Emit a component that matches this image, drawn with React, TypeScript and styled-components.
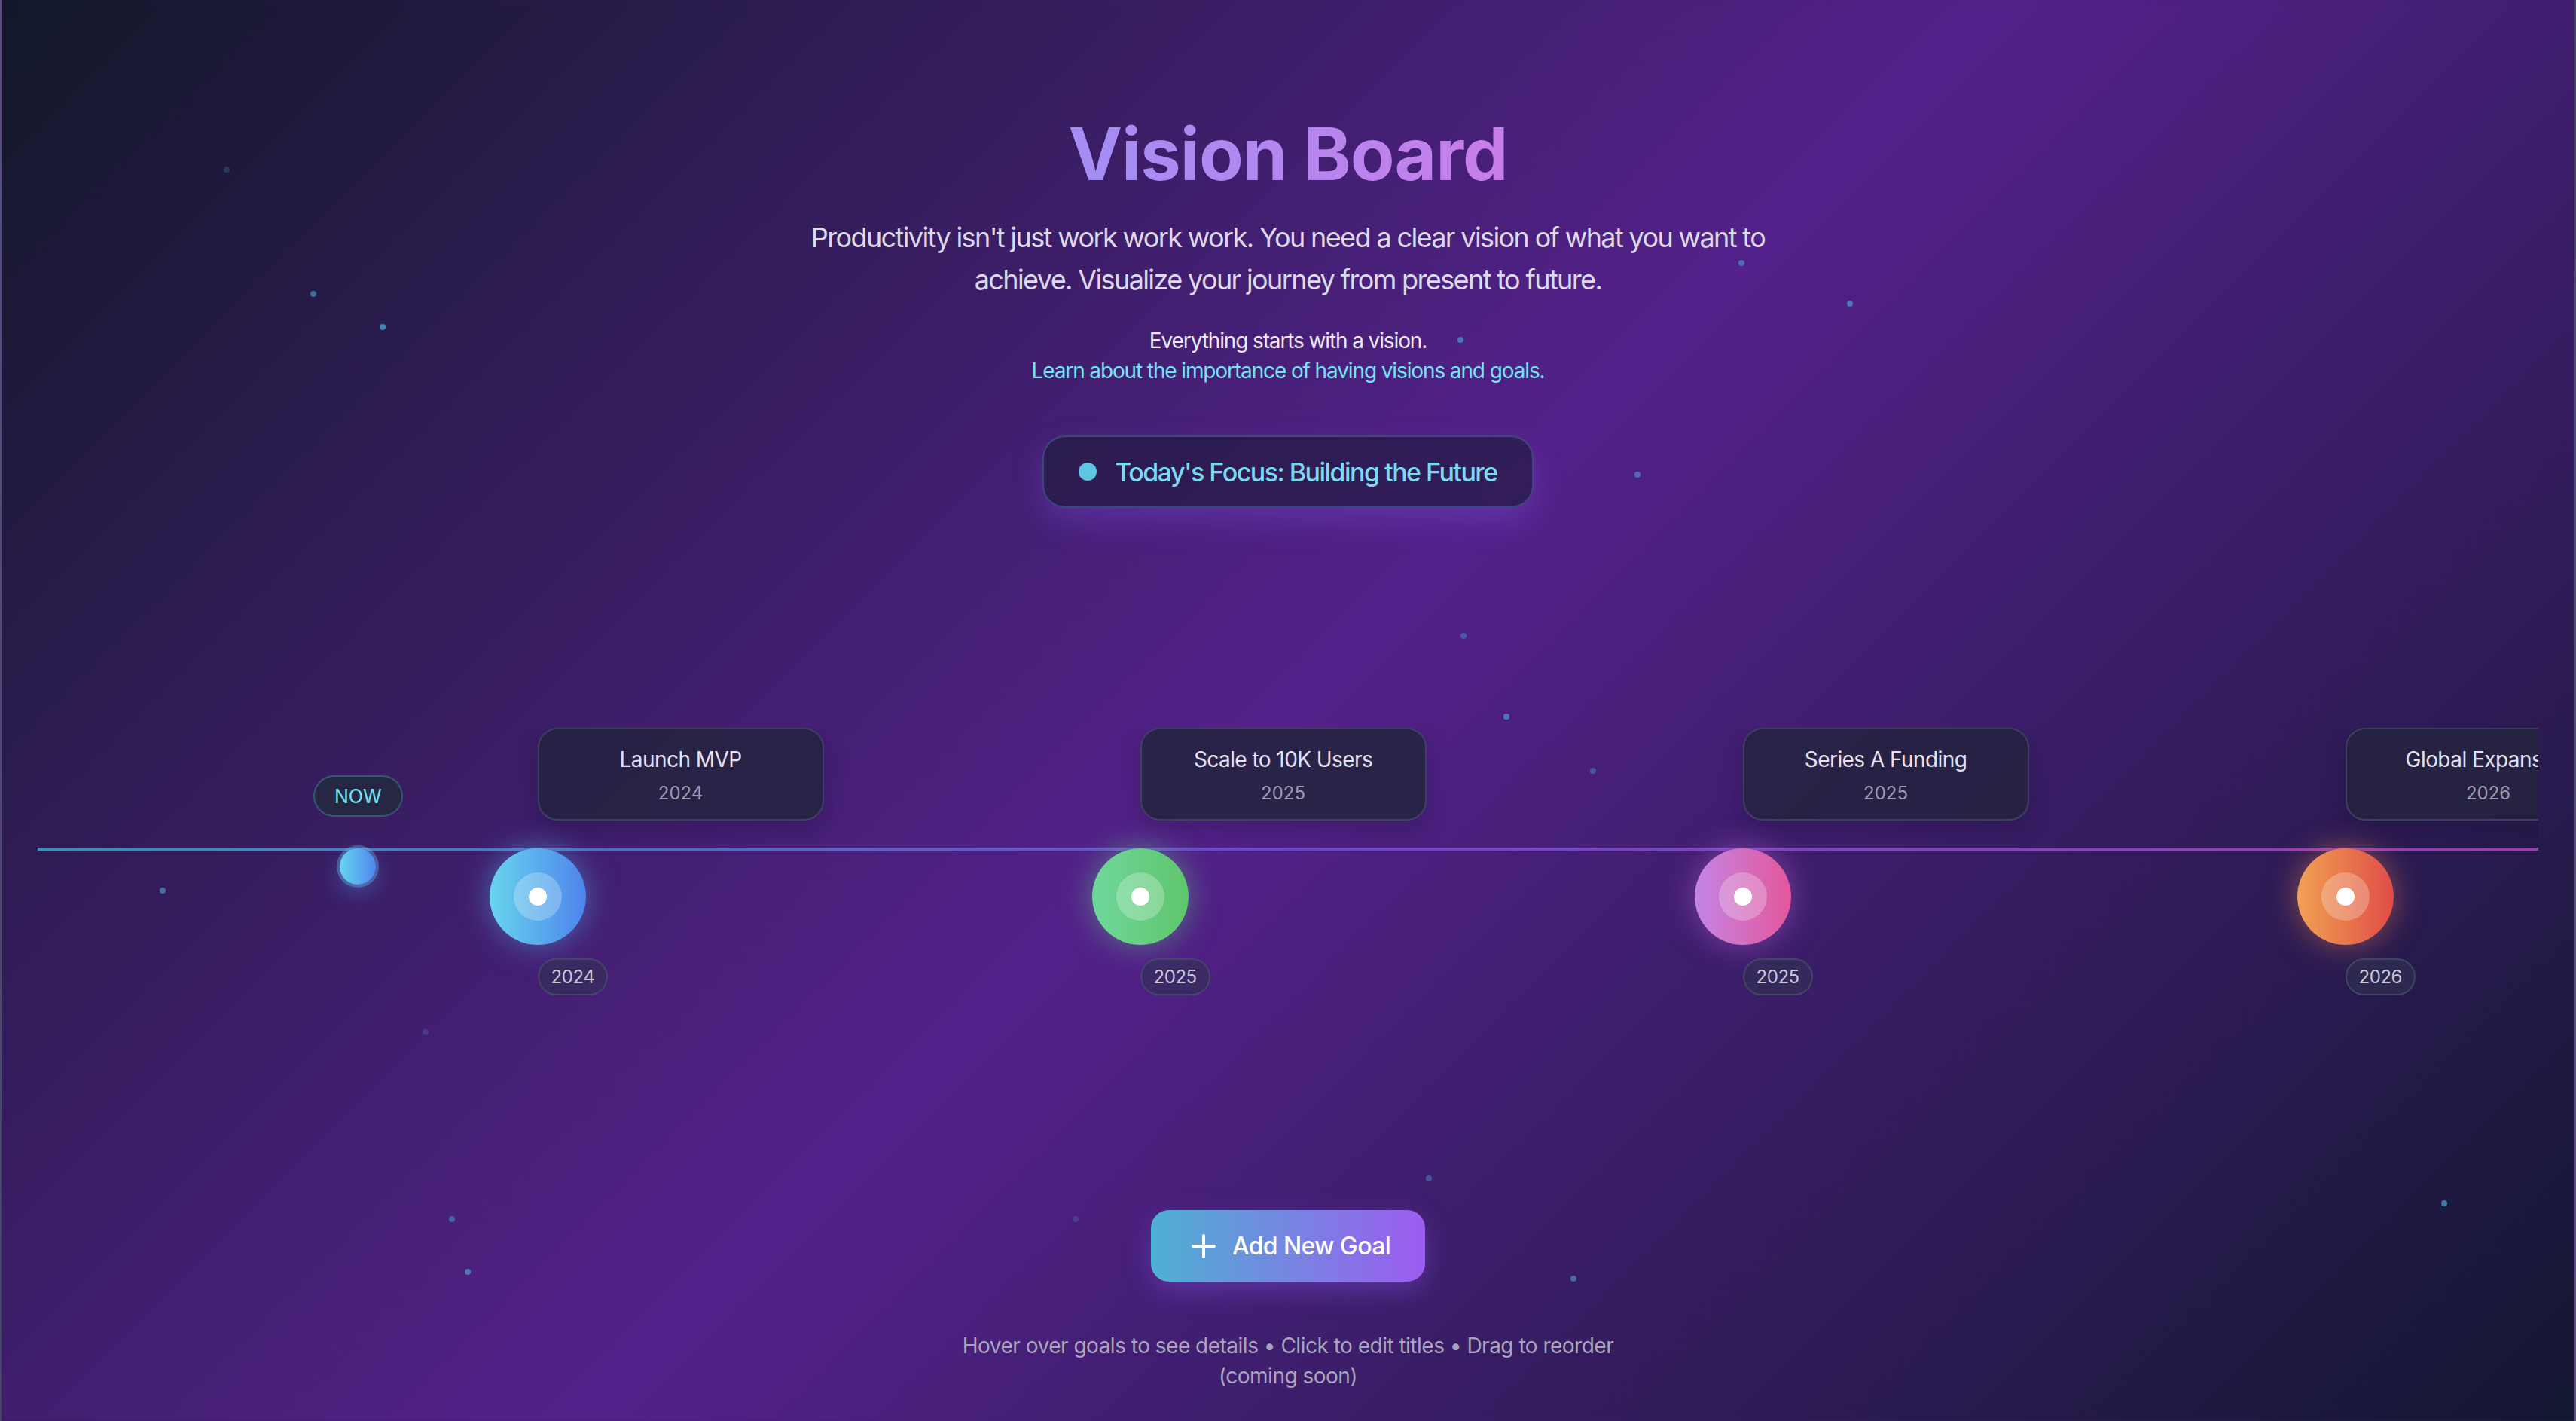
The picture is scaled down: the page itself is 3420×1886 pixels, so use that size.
import * as React from "react"
import styled, { createGlobalStyle } from "styled-components"
import { Plus } from "lucide-react"

const GlobalStyle = createGlobalStyle`
  html, body {
    margin: 0;
    padding: 0;
  }
  body {
    font-family: Inter, "Noto Sans", "Liberation Sans", sans-serif;
    background: #111827;
  }
  * {
    box-sizing: border-box;
  }
`

const Page = styled.div`
  position: relative;
  min-height: 1886px;
  overflow: hidden;
  display: flex;
  flex-direction: column;
  align-items: center;
  padding-top: 156px;
  background: linear-gradient(135deg, #121829 0%, #53218a 50%, #131731 100%);
  border-left: 2px solid rgba(148, 163, 184, 0.35);
  border-right: 2px solid rgba(148, 163, 184, 0.35);
`

const Star = styled.span<{ $o: number }>`
  position: absolute;
  width: 8px;
  height: 8px;
  border-radius: 50%;
  background: #4a8fc2;
  opacity: ${(p) => p.$o};
`

const Title = styled.h1`
  margin: 0 0 35px;
  font-size: 96px;
  line-height: 1;
  font-weight: 700;
  letter-spacing: -1px;
  background: linear-gradient(to right, #a28ef4, #c87eea);
  -webkit-background-clip: text;
  background-clip: text;
  color: transparent;
`

const Intro = styled.p`
  margin: 0;
  max-width: 1344px;
  text-align: center;
  font-size: 36px;
  line-height: 56px;
  letter-spacing: -0.045em;
  color: #ddd8ea;
`

const Note = styled.div`
  margin-top: 33px;
  text-align: center;
  font-size: 28px;
  line-height: 40px;
  letter-spacing: -0.04em;
  color: #ece9f3;
`

const NoteLink = styled.a`
  display: block;
  color: #76e2f6;
  text-decoration: none;
`

const FocusPill = styled.div`
  margin-top: 66px;
  display: flex;
  align-items: center;
  gap: 24px;
  height: 96px;
  padding: 0 46px;
  border-radius: 30px;
  border: 2px solid rgba(70, 110, 160, 0.55);
  background: rgba(28, 26, 56, 0.6);
  box-shadow: 0 18px 40px rgba(139, 92, 246, 0.28);
  color: #7dd9ef;
  font-size: 34px;
  font-weight: 500;
  letter-spacing: -0.045em;
`

const FocusDot = styled.span`
  width: 24px;
  height: 24px;
  border-radius: 50%;
  background: #5ec6e2;
`

const Track = styled.div`
  position: relative;
  align-self: stretch;
  margin: 292px 48px 0;
  overflow: hidden;

  &::before {
    content: "";
    position: absolute;
    left: 0;
    right: 0;
    top: 159px;
    height: 4px;
    background: linear-gradient(to right, #3fa6c6, #6f4fd8 50%, #b046bd);
    opacity: 0.85;
  }
`

const Row = styled.div`
  position: relative;
  display: flex;
  align-items: flex-start;
  padding-left: 366px;
`

const NowMarker = styled.div`
  flex: 0 0 118px;
  display: flex;
  flex-direction: column;
  align-items: center;
  margin-top: 63px;
`

const NowBadge = styled.span`
  height: 55px;
  padding: 0 26px;
  display: flex;
  align-items: center;
  border-radius: 999px;
  border: 2px solid rgba(56, 130, 150, 0.55);
  background: #262743;
  color: #72e3f7;
  font-size: 25px;
  font-weight: 400;
`

const NowDot = styled.span`
  margin-top: 42px;
  width: 48px;
  height: 48px;
  border-radius: 50%;
  background: linear-gradient(to right, #67d6f0, #4f86ee);
  box-shadow: 0 0 0 4px rgba(103, 196, 240, 0.35), 0 10px 30px rgba(80, 150, 240, 0.45);
`

const Goal = styled.div<{ $first?: boolean }>`
  flex: 0 0 800px;
  display: flex;
  flex-direction: column;
  align-items: flex-start;
  margin-left: ${(p) => (p.$first ? "115px" : "0")};
`

const GoalCard = styled.div`
  margin-left: 64px;
  width: 380px;
  height: 123px;
  padding-top: 20px;
  display: flex;
  flex-direction: column;
  align-items: center;
  gap: 9px;
  border-radius: 26px;
  border: 2px solid rgba(70, 72, 105, 0.8);
  background: rgba(36, 35, 64, 0.88);
  box-shadow: 0 12px 30px rgba(15, 10, 40, 0.25);
`

const GoalTitle = styled.span`
  font-size: 28px;
  line-height: 40px;
  font-weight: 400;
  letter-spacing: -0.02em;
  color: #e6e0f0;
  white-space: nowrap;
`

const GoalYear = styled.span`
  font-size: 24px;
  line-height: 32px;
  color: #9d98b5;
`

const Orb = styled.div<{ $from: string; $to: string; $glow: string }>`
  margin-top: 37px;
  width: 128px;
  height: 128px;
  border-radius: 50%;
  display: flex;
  align-items: center;
  justify-content: center;
  background: linear-gradient(to right, ${(p) => p.$from}, ${(p) => p.$to});
  box-shadow: 0 0 40px ${(p) => p.$glow};
`

const OrbRing = styled.div`
  width: 64px;
  height: 64px;
  border-radius: 50%;
  display: flex;
  align-items: center;
  justify-content: center;
  background: rgba(255, 255, 255, 0.25);
`

const OrbCore = styled.span`
  width: 24px;
  height: 24px;
  border-radius: 50%;
  background: #ffffff;
`

const YearBadge = styled.span`
  margin: 18px 0 0 64px;
  height: 49px;
  padding: 0 16px;
  display: flex;
  align-items: center;
  border-radius: 999px;
  border: 2px solid rgba(75, 80, 110, 0.7);
  background: rgba(48, 50, 82, 0.6);
  color: #cbc6da;
  font-size: 24px;
  letter-spacing: -0.02em;
`

const AddButton = styled.button`
  margin-top: 285px;
  width: 364px;
  height: 95px;
  display: flex;
  align-items: center;
  justify-content: center;
  gap: 14px;
  border: none;
  border-radius: 24px;
  background: linear-gradient(to right, #4eb0d2, #9d5cf0);
  box-shadow: 0 12px 34px rgba(139, 92, 246, 0.35);
  color: #ffffff;
  font-family: inherit;
  font-size: 32px;
  font-weight: 500;
  letter-spacing: -0.02em;
  cursor: pointer;
`

const Hint = styled.p`
  margin: 65px 0 0;
  max-width: 896px;
  text-align: center;
  font-size: 28px;
  line-height: 40px;
  letter-spacing: -0.018em;
  color: #a9a4bd;
`

const stars = [
  { x: 299, y: 225, o: 0.25 },
  { x: 414, y: 390, o: 0.7 },
  { x: 506, y: 434, o: 0.9 },
  { x: 2310, y: 349, o: 0.7 },
  { x: 2454, y: 403, o: 0.8 },
  { x: 1937, y: 451, o: 0.8 },
  { x: 2172, y: 630, o: 0.7 },
  { x: 1941, y: 844, o: 0.5 },
  { x: 1998, y: 951, o: 0.8 },
  { x: 2113, y: 1023, o: 0.5 },
  { x: 214, y: 1182, o: 0.7 },
  { x: 563, y: 1370, o: 0.25 },
  { x: 598, y: 1618, o: 0.6 },
  { x: 619, y: 1688, o: 0.8 },
  { x: 1426, y: 1618, o: 0.25 },
  { x: 1895, y: 1564, o: 0.5 },
  { x: 2087, y: 1697, o: 0.7 },
  { x: 3243, y: 1597, o: 0.8 },
]

const goals = [
  { title: "Launch MVP", year: "2024", from: "#68d5ee", to: "#4d84ec", glow: "rgba(90, 170, 240, 0.55)" },
  { title: "Scale to 10K Users", year: "2025", from: "#6fd79c", to: "#5fc56c", glow: "rgba(100, 210, 140, 0.5)" },
  { title: "Series A Funding", year: "2025", from: "#c485e6", to: "#e3579a", glow: "rgba(190, 100, 220, 0.5)" },
  { title: "Global Expansion", year: "2026", from: "#f0a252", to: "#e04c48", glow: "rgba(240, 130, 80, 0.5)" },
]

const App = () => {
  return (
    <>
      <GlobalStyle />
      <Page>
        {stars.map((s, i) => (
          <Star key={i} $o={s.o} style={{ left: s.x - 4, top: s.y - 4 }} />
        ))}
        <Title>Vision Board</Title>
        <Intro>
          Productivity isn't just work work work. You need a clear vision of what you want to
          achieve. Visualize your journey from present to future.
        </Intro>
        <Note>
          Everything starts with a vision.
          <NoteLink href="#">Learn about the importance of having visions and goals.</NoteLink>
        </Note>
        <FocusPill>
          <FocusDot />
          Today's Focus: Building the Future
        </FocusPill>
        <Track>
          <Row>
            <NowMarker>
              <NowBadge>NOW</NowBadge>
              <NowDot />
            </NowMarker>
            {goals.map((g, i) => (
              <Goal key={g.title} $first={i === 0}>
                <GoalCard>
                  <GoalTitle>{g.title}</GoalTitle>
                  <GoalYear>{g.year}</GoalYear>
                </GoalCard>
                <Orb $from={g.from} $to={g.to} $glow={g.glow}>
                  <OrbRing>
                    <OrbCore />
                  </OrbRing>
                </Orb>
                <YearBadge>{g.year}</YearBadge>
              </Goal>
            ))}
          </Row>
        </Track>
        <AddButton>
          <Plus size={48} strokeWidth={2} />
          Add New Goal
        </AddButton>
        <Hint>
          Hover over goals to see details • Click to edit titles • Drag to reorder (coming soon)
        </Hint>
      </Page>
    </>
  )
}

export default App
